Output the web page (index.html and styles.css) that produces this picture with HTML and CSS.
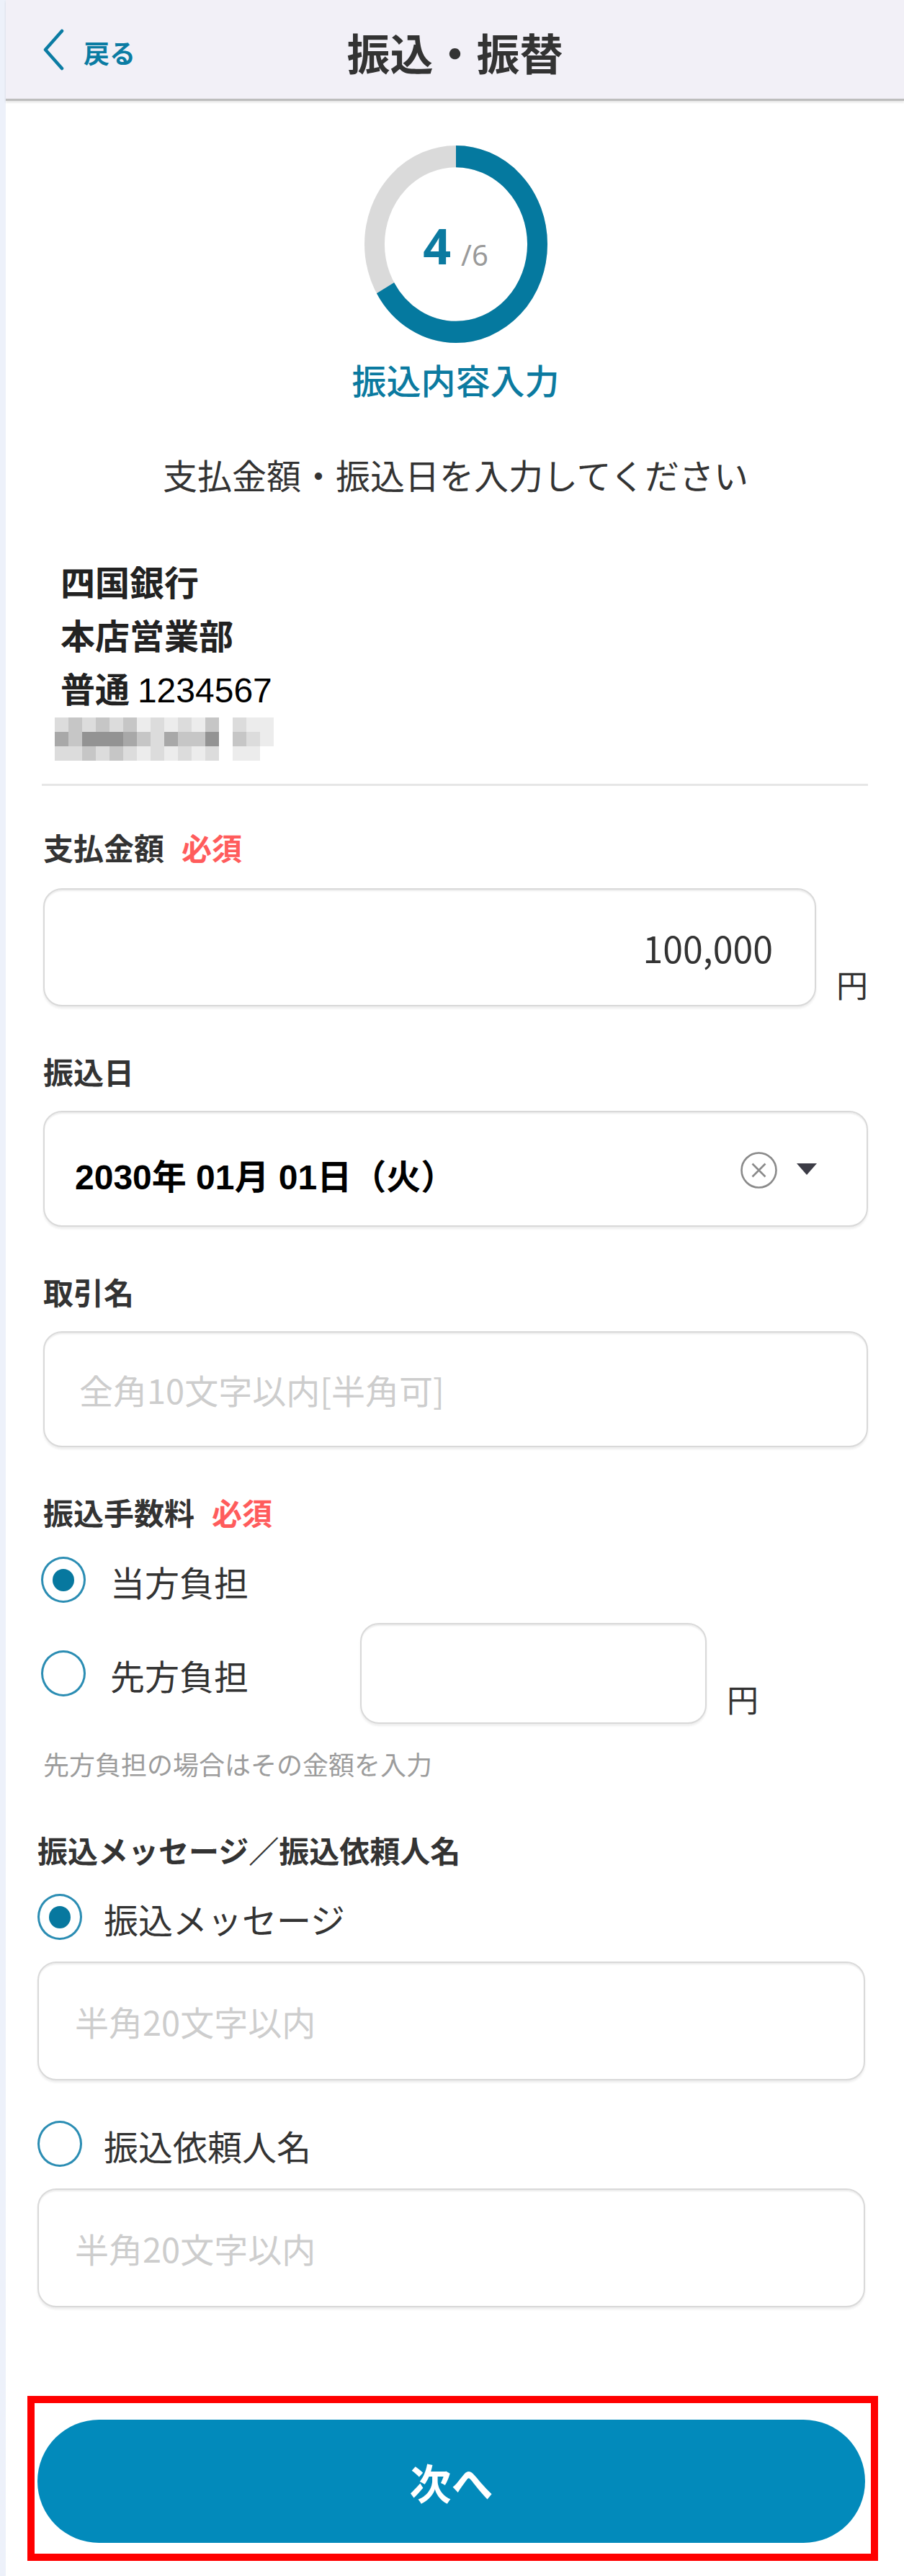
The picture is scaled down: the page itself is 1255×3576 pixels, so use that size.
FILE: index.html
```html
<!DOCTYPE html>
<html lang="ja">
<head>
  <meta charset="UTF-8">
  <meta name="viewport" content="width=device-width, initial-scale=1.0">
  <title>振込・振替</title>
  <link rel="stylesheet" href="styles.css">
</head>
<body>
  <div class="page">
    <header class="topbar">
      <a class="back" href="#">
        <svg class="back-icon" width="32" height="58" viewBox="0 0 32 58">
          <path d="M28 3 L5 29 L28 55" fill="none" stroke="#0b7ca3" stroke-width="4.5" stroke-linecap="round" stroke-linejoin="round"/>
        </svg>
        <span>戻る</span>
      </a>
      <h1 class="title">振込・振替</h1>
      <span></span>
    </header>

    <main class="content">
      <section class="progress">
        <div class="ring">
          <svg width="254" height="274" viewBox="0 0 100 100" preserveAspectRatio="none">
            <circle cx="50" cy="50" r="44.5" fill="none" stroke="#dadada" stroke-width="11"/>
            <circle cx="50" cy="50" r="44.5" fill="none" stroke="#05799f" stroke-width="11"
                    stroke-dasharray="186.4 400" transform="rotate(-90 50 50)"/>
          </svg>
          <div class="ring-count"><span class="step">4</span><span class="total">/6</span></div>
        </div>
        <p class="step-name">振込内容入力</p>
      </section>

      <p class="lead">支払金額・振込日を入力してください</p>

      <div class="payee">
        <p>四国銀行</p>
        <p>本店営業部</p>
        <p>普通 <span class="acct">1234567</span></p>
        <div class="mosaic">
          <i class="s2"></i><i class="s3"></i><i class="s2"></i><i class="s3"></i><i class="s2"></i><i class="s3"></i><i class="s1"></i><i class="s2"></i><i class="s1"></i><i class="s2"></i><i class="s1"></i><i class="s3"></i><i class="s0"></i><i class="s2"></i><i class="s1"></i><i class="s1"></i>
          <i class="s4"></i><i class="s3"></i><i class="s5"></i><i class="s5"></i><i class="s5"></i><i class="s4"></i><i class="s3"></i><i class="s2"></i><i class="s4"></i><i class="s3"></i><i class="s3"></i><i class="s5"></i><i class="s0"></i><i class="s3"></i><i class="s2"></i><i class="s1"></i>
          <i class="s2"></i><i class="s2"></i><i class="s3"></i><i class="s2"></i><i class="s3"></i><i class="s2"></i><i class="s1"></i><i class="s2"></i><i class="s1"></i><i class="s2"></i><i class="s1"></i><i class="s2"></i><i class="s0"></i><i class="s1"></i><i class="s1"></i><i class="s0"></i>
        </div>
      </div>

      <hr class="divider">

      <div class="label label-first">支払金額<span class="required">必須</span></div>
      <div class="amount-row">
        <input class="input amount" type="text" value="100,000">
        <span class="yen">円</span>
      </div>

      <div class="label">振込日</div>
      <div class="input date">
        <span class="date-text">2030年 01月 01日（火）</span>
        <svg class="clear" width="53" height="53" viewBox="0 0 53 53">
          <circle cx="26.5" cy="26.5" r="24" fill="none" stroke="#8a8a8a" stroke-width="2.6"/>
          <path d="M17.5 17.5 L35.5 35.5 M35.5 17.5 L17.5 35.5" stroke="#8a8a8a" stroke-width="2.6"/>
        </svg>
        <svg class="caret" width="28" height="16" viewBox="0 0 28 16">
          <path d="M0 0 H28 L14 16 Z" fill="#3c3c46"/>
        </svg>
      </div>

      <div class="label">取引名</div>
      <input class="input" type="text" placeholder="全角10文字以内[半角可]">

      <div class="label">振込手数料<span class="required">必須</span></div>
      <div class="radio-row fee-first">
        <span class="radio on"></span>
        <span class="radio-text">当方負担</span>
      </div>
      <div class="radio-row fee-second">
        <span class="radio"></span>
        <span class="radio-text fee-text">先方負担</span>
        <input class="input fee-input" type="text">
        <span class="yen">円</span>
      </div>
      <p class="hint">先方負担の場合はその金額を入力</p>
    </main>

    <section class="lower">
      <div class="label label-lower">振込メッセージ／振込依頼人名</div>
      <div class="radio-row msg-row">
        <span class="radio on"></span>
        <span class="radio-text">振込メッセージ</span>
      </div>
      <input class="input msg-input" type="text" placeholder="半角20文字以内">
      <div class="radio-row msg-row msg-row-second">
        <span class="radio"></span>
        <span class="radio-text">振込依頼人名</span>
      </div>
      <input class="input msg-input" type="text" placeholder="半角20文字以内">
    </section>

    <div class="next-wrap">
      <button class="next" type="button">次へ</button>
    </div>
  </div>
</body>
</html>
```

FILE: styles.css
```css
html, body {
  margin: 0;
  padding: 0;
}

body {
  background-color: #edf1fa;
  font-family: "Noto Sans CJK JP", "Noto Sans", sans-serif;
  color: #333;
}

p {
  margin: 0;
}

.page {
  margin-left: 8px;
  min-height: 3576px;
  background-color: #fff;
  box-sizing: border-box;
  padding-bottom: 22px;
}

/* header */

.topbar {
  display: grid;
  grid-template-columns: 1fr auto 1fr;
  align-items: center;
  height: 137px;
  background-color: #f2f0f7;
  border-bottom: 3px solid #bdbdbd;
  box-shadow: 0 2px 3px rgba(0, 0, 0, 0.12);
}

.back {
  display: flex;
  align-items: center;
  gap: 26px;
  padding-left: 50px;
  color: #0b7ca3;
  font-size: 36px;
  font-weight: 700;
  text-decoration: none;
}

.back span {
  padding-top: 6px;
}

.title {
  margin: 0;
  font-size: 60px;
  font-weight: 700;
  color: #333;
  line-height: 1;
  padding-top: 6px;
}

/* progress */

.content {
  padding: 0 50px 0 52px;
}

.progress {
  display: flex;
  flex-direction: column;
  align-items: center;
  padding-top: 62px;
}

.ring {
  position: relative;
  width: 254px;
  height: 274px;
}

.ring svg {
  display: block;
}

.ring-count {
  position: absolute;
  inset: 0;
  display: flex;
  align-items: center;
  justify-content: center;
  font-family: "Noto Sans", sans-serif;
  line-height: 1;
  padding-top: 4px;
}

.step {
  font-size: 68px;
  font-weight: 700;
  color: #0b7aa0;
}

.total {
  font-size: 40px;
  color: #9a9a9a;
  margin-left: 14px;
  position: relative;
  top: 13px;
}

.step-name {
  margin-top: 21px;
  font-size: 48px;
  line-height: 58px;
  font-weight: 500;
  color: #0b7aa0;
}

.lead {
  margin-top: 74px;
  text-align: center;
  font-size: 48px;
  line-height: 58px;
  color: #333;
}

/* payee */

.payee {
  margin-top: 82px;
  padding-left: 24px;
  font-size: 48px;
  line-height: 74px;
  font-weight: 700;
  color: #222;
}

.acct {
  font-family: "Liberation Sans", sans-serif;
  font-weight: 400;
  font-size: 48px;
  color: #000;
}

.mosaic {
  display: grid;
  grid-template-columns: repeat(16, 19px);
  grid-auto-rows: 20px;
  margin-left: -8px;
  width: 304px;
}

.mosaic i { display: block; }
.mosaic .s0 { background-color: #fff; }
.mosaic .s1 { background-color: #ececec; }
.mosaic .s2 { background-color: #dcdcdc; }
.mosaic .s3 { background-color: #c6c6c6; }
.mosaic .s4 { background-color: #a8a8a8; }
.mosaic .s5 { background-color: #939393; }

.divider {
  margin: 32px 0 0 -2px;
  border: 0;
  height: 3px;
  background-color: #e6e6e6;
}

/* form */

.label {
  margin-top: 65px;
  font-size: 42px;
  line-height: 50px;
  font-weight: 700;
  color: #333;
}

.label-first {
  margin-top: 60px;
}

.required {
  margin-left: 24px;
  color: #ff5c5c;
}

.input {
  display: block;
  box-sizing: border-box;
  width: 100%;
  height: 161px;
  margin: 30px 0 0;
  padding: 0 48px;
  border: 2px solid #d9d9d9;
  border-radius: 26px;
  box-shadow: inset 0 3px 2px -1px rgba(0, 0, 0, 0.08), 0 3px 3px rgba(0, 0, 0, 0.07);
  background-color: #fff;
  font-family: "Noto Sans CJK JP", sans-serif;
  font-size: 47px;
  color: #333;
  outline: none;
}

.input::placeholder {
  color: #cdcdcd;
}

.amount-row {
  display: flex;
  align-items: flex-end;
  margin-top: 32px;
}

.amount-row .input {
  margin: 0;
  width: 1073px;
  height: 164px;
  text-align: right;
  padding-right: 58px;
  font-size: 50px;
}

.yen {
  margin-left: 28px;
  font-size: 44px;
  line-height: 50px;
  padding-bottom: 6px;
  color: #333;
}

.date {
  display: flex;
  align-items: center;
  gap: 26px;
  padding: 0 69px 0 42px;
}

.date-text {
  flex: 1;
  font-family: "Liberation Sans", "Noto Sans CJK JP", sans-serif;
  font-weight: 700;
  font-size: 48px;
  color: #000;
  padding-top: 14px;
}

.clear {
  margin-top: 4px;
}

/* radios */

.radio-row {
  display: flex;
  align-items: center;
  height: 90px;
  margin-top: 24px;
}

.radio {
  flex: none;
  box-sizing: border-box;
  width: 62px;
  height: 64px;
  margin-left: -3px;
  margin-right: 34px;
  border: 3px solid #2b8db3;
  border-radius: 50%;
  display: flex;
  align-items: center;
  justify-content: center;
}

.radio.on::after {
  content: "";
  width: 30px;
  height: 31px;
  border-radius: 50%;
  background-color: #07789f;
}

.radio-text {
  font-size: 48px;
  line-height: 58px;
  color: #333;
  padding-top: 4px;
}

.fee-second {
  height: 140px;
  margin-top: 15px;
}

.fee-text {
  width: 347px;
}

.fee-second .input {
  margin: 0;
  width: 481px;
  height: 140px;
}

.fee-second .yen {
  align-self: flex-end;
  padding-bottom: 10px;
}

.hint {
  margin-top: 33px;
  font-size: 36px;
  line-height: 44px;
  color: #9c9c9c;
}

/* lower part */

.lower {
  padding: 0 54px 0 44px;
}

.label-lower {
  margin-top: 73px;
}

.msg-row {
  height: 90px;
  margin-top: 23px;
}

.msg-row .radio {
  margin-left: 0;
  margin-right: 30px;
}

.msg-row-second {
  height: 80px;
  margin-top: 48px;
}

.msg-input {
  height: 165px;
  margin-top: 17px;
  padding-left: 50px;
}

.msg-row-second + .msg-input {
  margin-top: 22px;
}

/* next button */

.next-wrap {
  margin: 123px 36px 0 30px;
  border: 10px solid #ff0000;
  padding: 23px 8px 15px 4px;
}

.next {
  display: block;
  width: 100%;
  height: 171px;
  border: 0;
  border-radius: 86px;
  background-color: #028abb;
  color: #fff;
  font-family: "Noto Sans CJK JP", sans-serif;
  font-size: 58px;
  font-weight: 700;
}
```
